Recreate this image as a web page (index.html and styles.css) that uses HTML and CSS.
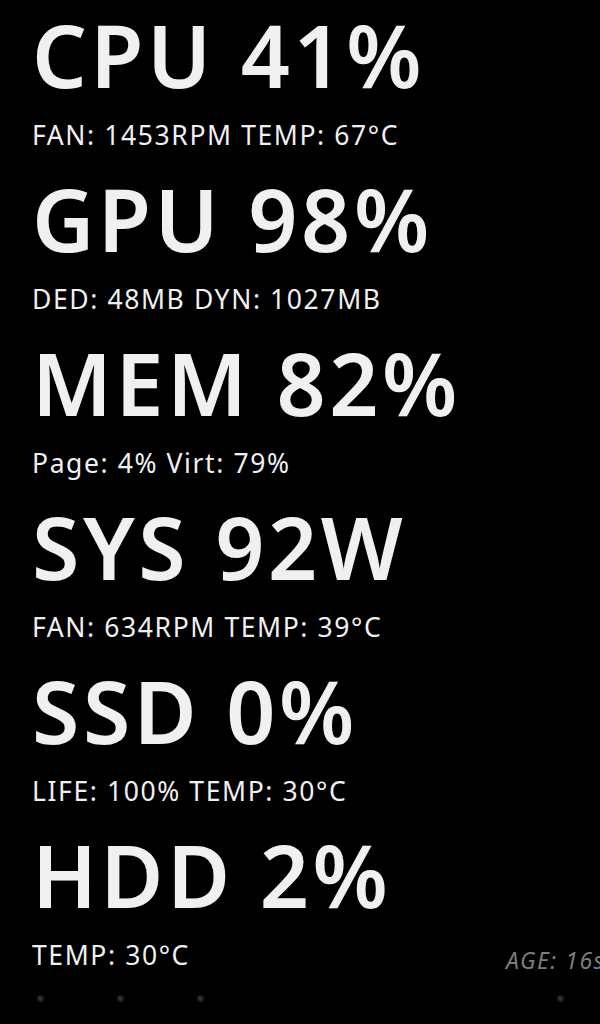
FILE: index.html
```html
<!DOCTYPE html>
<html>
<head>
<meta charset="utf-8">
<link rel="stylesheet" href="styles.css">
</head>
<body>
<main class="panel">
  <section class="stat">
    <div class="big">CPU 41%</div>
    <div class="small">FAN: 1453RPM TEMP: 67°C</div>
  </section>
  <section class="stat">
    <div class="big">GPU 98%</div>
    <div class="small">DED: 48MB DYN: 1027MB</div>
  </section>
  <section class="stat">
    <div class="big">MEM 82%</div>
    <div class="small">Page: 4% Virt: 79%</div>
  </section>
  <section class="stat">
    <div class="big">SYS 92W</div>
    <div class="small">FAN: 634RPM TEMP: 39°C</div>
  </section>
  <section class="stat">
    <div class="big">SSD 0%</div>
    <div class="small">LIFE: 100% TEMP: 30°C</div>
  </section>
  <section class="stat">
    <div class="big">HDD 2%</div>
    <div class="small last">
      <span>TEMP: 30°C</span>
      <span class="age">AGE: 16s</span>
    </div>
  </section>
  <div class="dots">
    <span class="dot"></span>
    <span class="dot"></span>
    <span class="dot"></span>
    <span class="spacer"></span>
    <span class="dot"></span>
  </div>
</main>
</body>
</html>
```
FILE: styles.css
```css
html, body {
  margin: 0;
  padding: 0;
  background: #000;
  height: 100%;
  overflow: hidden;
}
.panel {
  font-family: "Noto Sans", "Open Sans", sans-serif;
  color: #f0f0f0;
  padding-left: 32px;
  display: flex;
  flex-direction: column;
}
.stat {
  display: flex;
  flex-direction: column;
  margin-bottom: 4px;
}
.big {
  font-size: 86px;
  font-weight: 600;
  line-height: 110px;
  letter-spacing: 3.6px;
  white-space: nowrap;
}
.small {
  font-size: 26.5px;
  line-height: 50px;
  letter-spacing: 1.6px;
  white-space: nowrap;
}
.last {
  display: flex;
  justify-content: space-between;
  align-items: flex-end;
  margin-right: -5px;
}
.age {
  font-size: 23px;
  line-height: 39px;
  font-style: italic;
  letter-spacing: 1.5px;
  color: #7c7c7c;
}
.dots {
  display: flex;
  align-items: center;
  gap: 75px;
  margin-left: 6px;
  margin-top: 12px;
}
.dot {
  width: 5px;
  height: 5px;
  border-radius: 50%;
  background: #2e2e2e;
  box-shadow: 0 0 3px 1px #1c1c1c;
}
.spacer {
  width: 205px;
}
```
